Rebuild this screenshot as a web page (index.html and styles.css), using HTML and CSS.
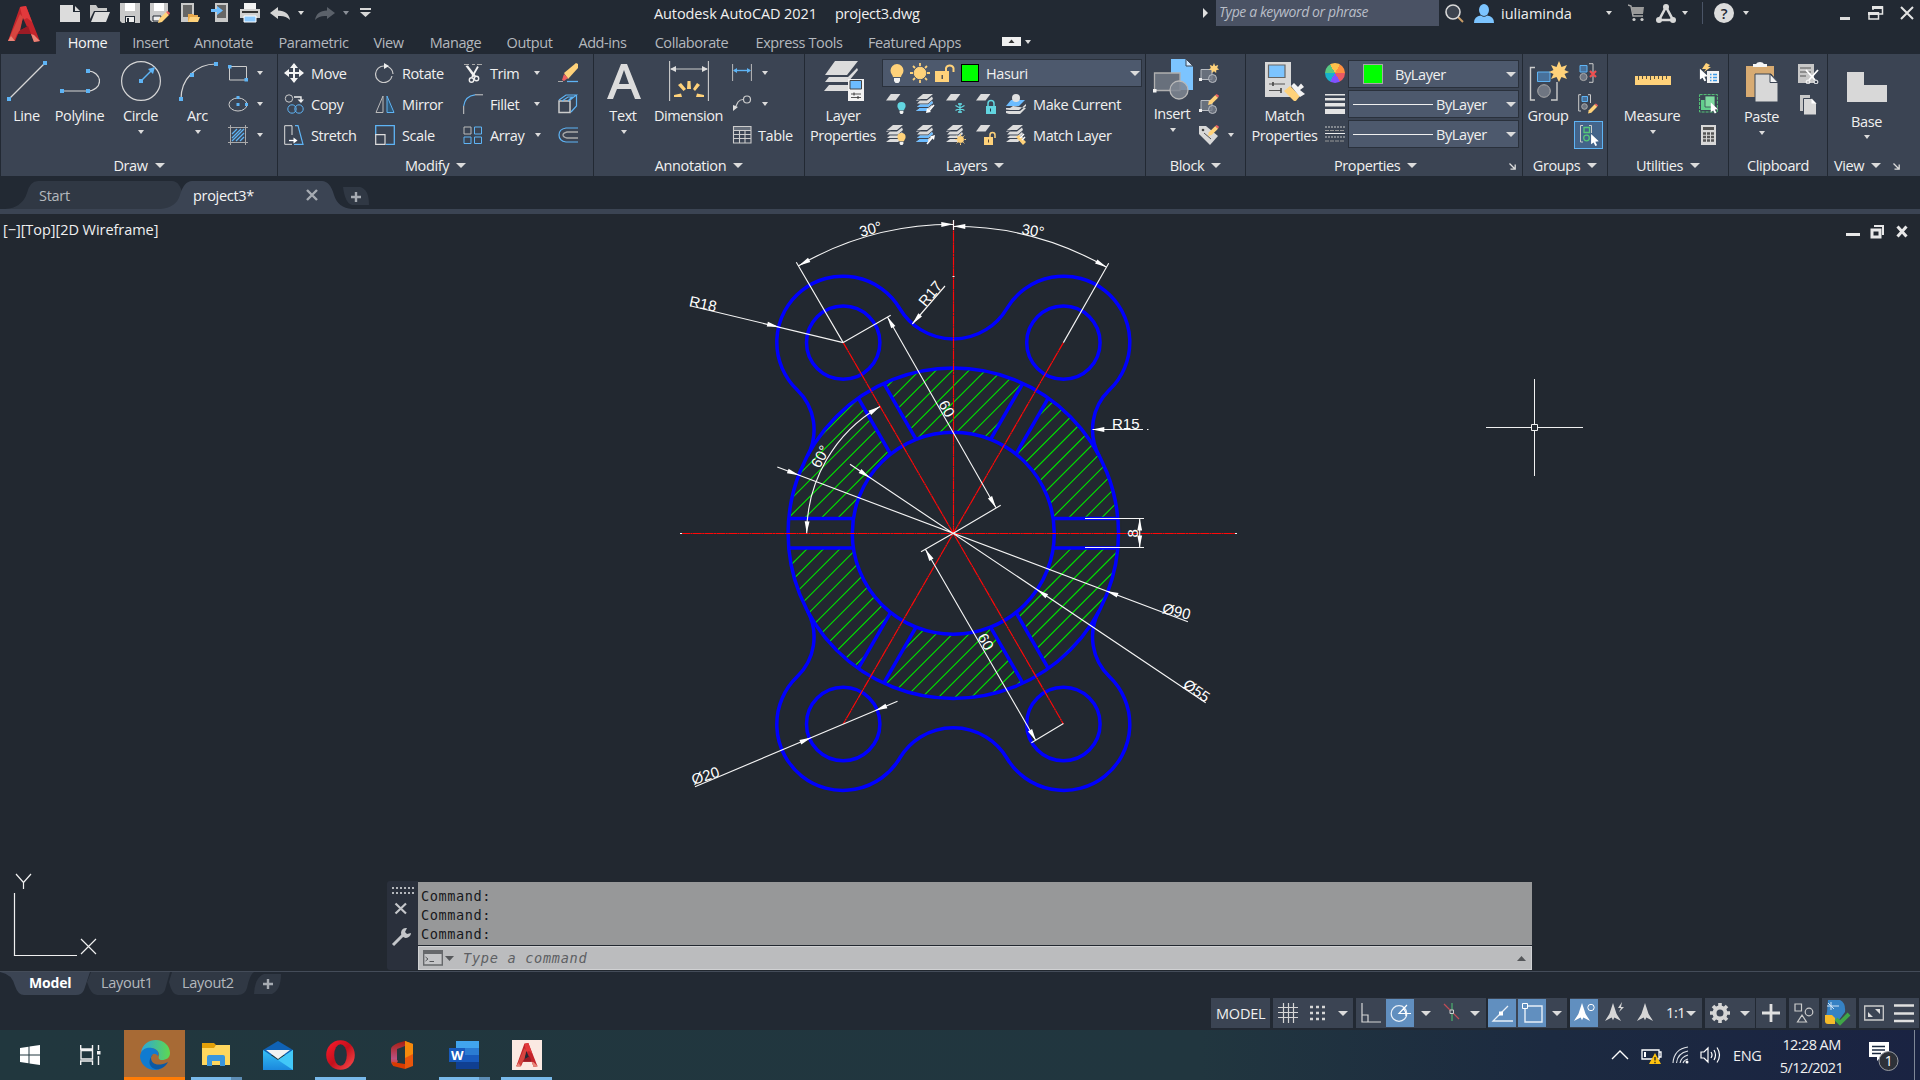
FILE: index.html
```html
<!DOCTYPE html>
<html lang="en">
<head>
<meta charset="utf-8">
<title>Autodesk AutoCAD 2021 - project3.dwg</title>
<link rel="stylesheet" href="styles.css">
</head>
<body>
<svg class="defs" width="0" height="0">
  <defs>
    <symbol id="sheet" viewBox="0 0 20 20"><path d="M6 0H18L12 8H0Z" fill="#dcdcdc"/></symbol>
    <symbol id="stack" viewBox="0 0 20 20"><path d="M7 0H17L11 5H1Z" fill="#dcdcdc"/><path d="M5 5.8H1L0 7Z M1 9.5L4 6.5H11L16 2.5L17 5L12 9.5Z M1 13L4 10.5H12L16 7L17 9L12 13Z M0 17L4 14H12L16 11L17 12.5L12 17Z" fill="#dcdcdc"/></symbol>
    <symbol id="bulb" viewBox="0 0 14 19"><path d="M7 0a6.5 6.5 0 0 1 6.5 6.5c0 3-2 4-2.5 6.500H3C2.500 10.500.5 9.500.5 6.500A6.500 6.500 0 0 1 7 0Z"/><path d="M4 14h6v3l-1.500 2h-3L4 17Z" fill="#f2f2f2"/></symbol>
    <symbol id="sun" viewBox="0 0 20 20"><circle cx="10" cy="10" r="5.800"/><path d="M10 0v3M10 17v3M0 10h3M17 10h3M3 3l2 2M15 15l2 2M3 17l2-2M15 5l2-2" stroke-width="1.800"/></symbol>
    <symbol id="cursor" viewBox="0 0 10 14"><path d="M1 0L10 8.500L6 9L8 13L6 14L4 10L1 12Z" fill="#fff"/></symbol>
    <symbol id="pencil" viewBox="0 0 12 12"><path d="M0 12L1 8L8 1L11 4L4 11Z" fill="#ffd27a"/><path d="M8 1L9.500 0L12 2L11 4Z" fill="#ef5f5f"/></symbol>
    <symbol id="blockshape" viewBox="0 0 20 20"><path d="M2 6.500H13V16.500H2Z" fill="#68707c" stroke="#b9bdc3"/><circle cx="13.500" cy="15.500" r="4" fill="#757c88" fill-opacity=".8" stroke="#b9bdc3"/><path d="M0 15h3v3H0Z" fill="#eee"/></symbol>
    <symbol id="annoA" viewBox="0 0 20 22"><path d="M10 0L14 12L19 20L11.500 16L10 19L8.500 16L1 20L6 12Z"/></symbol>
    <symbol id="acad" viewBox="0 0 32 36"><path d="M12 1L18 0L31 33L32 35L26 36L23 28H10L7 35L0 35Z" fill="#c4242b"/><path d="M12 1L18 0L24 16L19 12L15 14Z" fill="#e2393c"/><path d="M15 12L19 21L11 25Z" fill="#222933"/><path d="M15 11L12 25L9 28L6 35L0 35L12 8Z" fill="#d6453f"/><path d="M3 30L7 35H0ZM26 29L32 35L26 36L23 28Z" fill="#e98578"/><path d="M11 25L20 20L23 28H10Z" fill="#9c1b25"/></symbol>
    <symbol id="arrow" overflow="visible"><path d="M0 0L-12 -2.400V2.400Z" fill="#fff"/></symbol>
    <symbol id="launcher" viewBox="0 0 7 7"><path d="M.5 .5L6 6M6.200 1.500V6.200H1.500" fill="none" stroke="#ddd" stroke-width="1.300"/></symbol>
    <clipPath id="ring"><path clip-rule="evenodd" d="M788.100 533.300A165.200 165.200 0 1 1 1118.500 533.300A165.200 165.200 0 1 1 788.100 533.300ZM852.300 533.300A101 101 0 1 1 1054.300 533.300A101 101 0 1 1 852.300 533.300Z"/></clipPath>
    <linearGradient id="edgeA" x1="0" y1="0" x2="1" y2="0"><stop offset="0" stop-color="#2ba6dc"/><stop offset="1" stop-color="#5fd84f"/></linearGradient>
    <linearGradient id="mailA" x1="0" y1="0" x2="0" y2="1"><stop offset="0" stop-color="#35c0f5"/><stop offset="1" stop-color="#1b88dd"/></linearGradient>
    <linearGradient id="operaA" x1="0" y1="0" x2="1" y2="1"><stop offset="0" stop-color="#ff1b2d"/><stop offset=".5" stop-color="#c4101c"/><stop offset="1" stop-color="#ff5050"/></linearGradient>
    <linearGradient id="officeA" x1="0" y1="0" x2="0" y2="1"><stop offset="0" stop-color="#a81d10"/><stop offset=".7" stop-color="#b85080"/><stop offset="1" stop-color="#e03c10"/></linearGradient>
  </defs>
</svg>

<header class="top">
  <div class="logo"><svg width="32" height="36"><use href="#acad"/></svg></div>
  <div class="top-main">
    <div class="titlebar">
      <svg width="20" height="17"><path d="M0 0H13V7H20V17H0Z" fill="#dcdcdc"/><path d="M15 1L20 6H15Z" fill="#dcdcdc"/></svg>
      <svg width="20" height="17"><path d="M0 0H6L8 3H17V6H4L0 14Z" fill="#c8c8c8"/><path d="M5 7H20L16 17H1Z" fill="#dcdcdc"/></svg>
      <svg width="20" height="20"><path d="M0 0H20V20H2L0 18Z" fill="#c9c9c9"/><path d="M5 0H15V8H5Z" fill="#fff"/><path d="M5 13H15V20H5Z" fill="#222933"/><path d="M6 14H14V19H6Z" fill="#eee"/><path d="M7 15h2v4H7Z" fill="#222933"/></svg>
      <svg width="20" height="20"><path d="M0 0H18V10L9 19H2L0 17Z" fill="#c9c9c9"/><path d="M4 0H14V8H4Z" fill="#fff"/><path d="M3 13H11V18H3Z" fill="#eee" stroke="#222933"/><use href="#pencil" x="8" y="8" width="12" height="12"/></svg>
      <svg width="19" height="20"><path d="M0 0H13V19H0Z" fill="#c9c9c9"/><path d="M2 2H11V14H2Z" fill="#666"/><path d="M7 11H12L13 12H17V19H7Z" fill="#e9a94c"/><path d="M9 14H19L17 19H7Z" fill="#ffd27a"/></svg>
      <svg width="18" height="20"><path d="M4 0H17V19H4Z" fill="#c9c9c9"/><path d="M6 2H15V15H6Z" fill="#666"/><path d="M0 6H6V3L12 7.500L6 12V9H0Z" fill="#6cbcff"/></svg>
      <svg width="20" height="20"><path d="M4 0H16V6H4Z" fill="#f2f2f2"/><path d="M0 6H20V15H0Z" fill="#d0d0d0"/><path d="M2 8H18V10H2Z" fill="#333"/><path d="M4 13H16V19H4Z" fill="#8ccaff" stroke="#fff"/></svg>
      <svg width="20" height="13"><path d="M0 6L8 0V3.500C15 3.500 19 7 20 13C17 9.500 13 8.500 8 9V12Z" fill="#d4d4d4"/></svg>
      <i class="caret"></i>
      <svg width="20" height="13"><path d="M20 6L12 0V3.500C5 3.500 1 7 0 13C3 9.500 7 8.500 12 9V12Z" fill="#5b616a"/></svg>
      <i class="caret dim"></i>
      <svg width="11" height="10"><path d="M0 0H11V2H0ZM0 4H11L5.500 9Z" fill="#d8d8d8"/></svg>
      <span class="apptitle">Autodesk AutoCAD 2021</span>
      <span class="apptitle doc">project3.dwg</span>
      <svg width="6" height="10"><path d="M0 0L5 5L0 10Z" fill="#e0e0e0"/></svg>
      <div class="search">Type a keyword or phrase</div>
      <svg width="19" height="19"><path d="M13 13L18 18" stroke="#c89b66" stroke-width="2"/><circle cx="8" cy="8" r="7" fill="#3c434e" stroke="#d8d8d8" stroke-width="1.600"/></svg>
      <svg width="20" height="19"><ellipse cx="10" cy="6" rx="5" ry="6" fill="#7cc4ff"/><path d="M0 19Q0 12 7 11.500Q10 14 13 11.500Q20 12 20 19Z" fill="#7cc4ff"/></svg>
      <span class="user">iuliaminda</span>
      <i class="caret"></i>
      <svg width="17" height="18"><path d="M0 1L3 2L5 12H15" fill="none" stroke="#aaa" stroke-width="1.400"/><path d="M3 3H16L15 10H5Z" fill="#9a9a9a"/><circle cx="6" cy="15.500" r="1.600" fill="#ccc"/><circle cx="14" cy="15.500" r="1.600" fill="#ccc"/></svg>
      <svg width="20" height="19"><path d="M10 3L3 16H17Z" fill="none" stroke="#d8d8d8" stroke-width="2.600"/><circle cx="10" cy="3" r="3" fill="#d8d8d8"/><circle cx="3" cy="16" r="3" fill="#d8d8d8"/><circle cx="17" cy="16" r="3" fill="#d8d8d8"/></svg>
      <i class="caret"></i>
      <svg width="2" height="22"><path d="M.5 0V22" stroke="#4a5466"/></svg>
      <span class="help">?</span>
      <i class="caret"></i>
      <svg width="11" height="16"><path d="M0 12H10V15H0Z" fill="#dcdcdc"/></svg>
      <svg width="16" height="15"><path d="M5 4V1H14.500V8H11" fill="none" stroke="#e4e4e4" stroke-width="1.500"/><path d="M4 0H15V3H4ZM0 6H11V9H0Z" fill="#e4e4e4"/><path d="M1 7H10.500V13H1Z" fill="none" stroke="#e4e4e4" stroke-width="1.500"/></svg>
      <svg width="14" height="14"><path d="M1 1L13 13M13 1L1 13" stroke="#e4e4e4" stroke-width="2"/></svg>
    </div>
    <nav class="tabs">
      <span class="on">Home</span><span>Insert</span><span>Annotate</span><span>Parametric</span><span>View</span><span>Manage</span><span>Output</span><span>Add-ins</span><span>Collaborate</span><span>Express Tools</span><span>Featured Apps</span>
      <svg width="19" height="9"><path d="M0 0H19V9H0Z" fill="#f0f0f0"/><path d="M6.500 6H12.500L9.500 2.500Z" fill="#333"/></svg>
      <i class="caret"></i>
    </nav>
  </div>
</header>

<section class="ribbon">
  <div class="panel draw">
    <div class="body">
      <div class="big"><svg width="40" height="40"><path d="M2 38L38 2" stroke="#d6d6d6" stroke-width="1.200"/><path d="M0 36h4v4H0ZM36 0h4v4H36Z" fill="#5eb4f5"/></svg><span>Line</span></div>
      <div class="big"><svg width="40" height="40"><path d="M2 30H28A11.500 10 0 0 0 28 10" fill="none" stroke="#d6d6d6" stroke-width="1.200"/><path d="M0 28h4v4H0ZM26 28h4v4H26ZM26 8h4v4H26Z" fill="#5eb4f5"/></svg><span>Polyline</span></div>
      <div class="big"><svg width="40" height="40"><circle cx="20" cy="20" r="19.400" fill="none" stroke="#d6d6d6" stroke-width="1.200"/><path d="M20 20L31 9" stroke="#5eb4f5" stroke-width="1.400"/><path d="M18 18h4v4H18ZM34 6L27 8L32 13Z" fill="#5eb4f5"/></svg><span>Circle</span><i class="caret"></i></div>
      <div class="big"><svg width="40" height="40"><path d="M3 38C3 18 18 3 38 3" fill="none" stroke="#d6d6d6" stroke-width="1.200"/><path d="M1 36h4v4H1ZM12 12h4v4H12ZM36 1h4v4H36Z" fill="#5eb4f5"/></svg><span>Arc</span><i class="caret"></i></div>
      <div class="rows minis">
        <div><svg width="20" height="20"><path d="M1.500 3.500H18.500V17H1.500Z" fill="none" stroke="#ccc"/><path d="M0 2h3.500v3.500H0ZM16.500 15H20v3.500H16.500Z" fill="#5eb4f5"/></svg><i class="caret"></i></div>
        <div><svg width="20" height="20"><ellipse cx="10" cy="10.500" rx="9" ry="6.500" fill="none" stroke="#ccc"/><path d="M8.500 2h3v3h-3ZM8.500 9h3v3h-3ZM17 9h3v3H17Z" fill="#5eb4f5"/></svg><i class="caret"></i></div>
        <div><svg width="20" height="20"><path d="M2.500 0V20M17.500 0V20M0 2.500H20M0 17.500H20" stroke="#aaa"/><path d="M4 9L9 4M4 13L13 4M4 16L16 4M8 16L16 8M12 16L16 12" stroke="#5eb4f5" stroke-width="1.300"/></svg><i class="caret"></i></div>
      </div>
    </div>
    <div class="ptitle"><span>Draw</span><i class="caret lg"></i></div>
  </div>

  <div class="panel modify">
    <div class="body">
      <div class="rows">
        <div><svg width="20" height="20"><path d="M10 1V19M1 10H19" stroke="#f4f4f4" stroke-width="2"/><path d="M10 0L14 5H6ZM10 20L14 15H6ZM0 10L5 6V14ZM20 10L15 6V14Z" fill="#f4f4f4"/></svg>Move</div>
        <div><svg width="20" height="20"><circle cx="5" cy="4.500" r="3.700" fill="none" stroke="#ccc"/><path d="M10 3H17V7" fill="none" stroke="#eee" stroke-width="1.400"/><path d="M13.500 5.500H20L17 9Z" fill="#eee"/><circle cx="8" cy="15" r="4.200" fill="none" stroke="#5eb4f5"/><circle cx="15" cy="15" r="4.200" fill="none" stroke="#5eb4f5"/></svg>Copy</div>
        <div><svg width="20" height="20"><path d="M8 19.300H.7V.7H8V10" fill="none" stroke="#ddd"/><path d="M11 .7H14L19 19.300H10" fill="none" stroke="#5eb4f5" stroke-width="1.200"/><path d="M5 15.500H11" stroke="#fff" stroke-width="1.300"/><path d="M9.500 12.500V18.500L13.500 15.500Z" fill="#fff"/></svg>Stretch</div>
      </div>
      <div class="rows">
        <div><svg width="20" height="20"><path d="M9 3A8.300 8.300 0 1 0 17 13M12 3Q18 6 18 11" fill="none" stroke="#ccc" stroke-width="1.200"/><path d="M9 0L14 3L9 6Z" fill="#eee"/></svg>Rotate</div>
        <div><svg width="20" height="20"><path d="M8 2V18.500H1Z" fill="none" stroke="#bbb"/><path d="M12 2V18.500H19Z" fill="#2f5877" stroke="#5eb4f5"/></svg>Mirror</div>
        <div><svg width="20" height="20"><path d="M.7 10V.7H19.300V19.300H11" fill="none" stroke="#5eb4f5" stroke-width="1.300"/><path d="M.7 9.700H10V19.300H.7Z" fill="none" stroke="#ddd" stroke-width="1.200"/></svg>Scale</div>
      </div>
      <div class="rows">
        <div><svg width="20" height="20"><path d="M1 1.500H6M9 1.500H12M14 1.500H19" stroke="#aaa"/><path d="M2.500 3L5 2.500L13 13L10.500 14Z" fill="#f2f2f2"/><path d="M15 3.500L9 14" stroke="#f2f2f2" stroke-width="1.800"/><circle cx="8.500" cy="17" r="2.200" fill="none" stroke="#eee" stroke-width="1.400"/><circle cx="13.500" cy="15.500" r="2.200" fill="none" stroke="#eee" stroke-width="1.400"/></svg>Trim<i class="caret c1"></i></div>
        <div><svg width="20" height="20"><path d="M.7 20V12" stroke="#ccc"/><path d="M.7 12Q2 2 12 .8" fill="none" stroke="#5eb4f5" stroke-width="1.200"/><path d="M12 .8H20" stroke="#ccc"/></svg>Fillet<i class="caret c2"></i></div>
        <div><svg width="20" height="20"><path d="M1 2H8V9H1Z" fill="none" stroke="#bbb"/><path d="M11.500 2H18.500V9H11.500ZM1 12H8V18.500H1ZM11.500 12H18.500V18.500H11.500Z" fill="none" stroke="#5eb4f5"/></svg>Array<i class="caret c3"></i></div>
      </div>
      <div class="rows">
        <div><svg width="20" height="20"><path d="M0 18.500H5" stroke="#aaa"/><path d="M9 18.500H20" stroke="#5eb4f5" stroke-width="1.300"/><path d="M6 10L18 0L20 1V5L10 16Z" fill="#ffd27a"/><path d="M6 11L10 15L6 18L4 17Z" fill="#ef5f5f"/></svg></div>
        <div><svg width="20" height="20"><path d="M1 7H12V18.500H1Z" fill="none" stroke="#ccc" stroke-width="1.500"/><path d="M1 6L8 1H18.500L12 6M18.500 1V12L13 18M4 7L10 3H14L10 7" fill="none" stroke="#5eb4f5" stroke-width="1.200"/></svg></div>
        <div><svg width="20" height="20"><path d="M20 3H8Q1 4 1 10T8 17H20" fill="none" stroke="#5eb4f5" stroke-width="1.200"/><path d="M20 7H9Q5 8 5 10T9 13H20" fill="none" stroke="#aaa" stroke-width="1.300"/></svg></div>
      </div>
    </div>
    <div class="ptitle"><span>Modify</span><i class="caret lg"></i></div>
  </div>

  <div class="panel annotation">
    <div class="body">
      <div class="big"><svg width="40" height="40"><path d="M17 3H23L37 38H31L27 28H13L9 38H3ZM20 9L15 23H25Z" fill="#dcdcdc"/></svg><span>Text</span><i class="caret"></i></div>
      <div class="big"><svg width="40" height="40"><path d="M.6 0V40M39.400 0V40M2 8H38" stroke="#ccc" stroke-width="1.100"/><path d="M1 8L7 5V11ZM39 8L33 5V11Z" fill="#ddd"/><path d="M18.500 20H21.500L22 28H18ZM9 24L12 22L17 28L14.500 30ZM31 24L28 22L24 28L26 30ZM5 34L12 32.500L13 36H5ZM35 34L28 32.500L27 36H35Z" fill="#ffd27a"/></svg><span>Dimension</span></div>
      <div class="rows">
        <div><svg width="20" height="20"><path d="M.6 1V18M19.400 1V18" stroke="#bbb"/><path d="M2 7.500H18" stroke="#5eb4f5" stroke-width="1.400"/><path d="M1 7.500L5 5V10ZM19 7.500L15 5V10Z" fill="#5eb4f5"/></svg><i class="caret"></i></div>
        <div><svg width="20" height="20"><circle cx="15" cy="5.500" r="3.500" fill="none" stroke="#ccc" stroke-width="1.200"/><path d="M11 5.500Q8 5.500 6 8L3 14" fill="none" stroke="#ccc" stroke-width="1.200"/><path d="M1 17V11L6 13Z" fill="#ddd"/></svg><i class="caret"></i></div>
        <div class="tbl"><svg width="20" height="20"><path d="M1.500 1.500H19V5H1.500Z" fill="#666e7a"/><path d="M1.500 1.500H19V18H1.500ZM1.500 5.500H19M1.500 9.500H19M1.500 13.500H19M7.500 5.500V18M13 5.500V18" fill="none" stroke="#ccc" stroke-width="1.100"/></svg>Table</div>
      </div>
    </div>
    <div class="ptitle"><span>Annotation</span><i class="caret lg"></i></div>
  </div>

  <div class="panel layers">
    <div class="body">
      <div class="big"><svg width="40" height="40"><path d="M11 0H34L23 14H1Z" fill="#dcdcdc"/><path d="M1 21L5 16H24L33 7L34 9L24 21ZM0 30L5 24H24V30Z" fill="#dcdcdc"/><path d="M24 18H40V40H24Z" fill="#f2f2f2"/><path d="M26 19.500H37.500V28H26Z" fill="#6cbcff" stroke="#444"/><path d="M27 33H37M27 36.500H37" stroke="#555"/><path d="M30 31.500v3M34 35v3" stroke="#333"/></svg><span>Layer</span><span class="second">Properties</span></div>
      <div class="rows">
        <div><div class="combo layer-combo">
          <svg width="14" height="19" fill="#ffd27a"><use href="#bulb"/></svg>
          <svg width="20" height="20" fill="#ffd27a" stroke="#ffd27a"><use href="#sun"/></svg>
          <svg width="20" height="20"><path d="M0 8H14V19H0Z" fill="#ffd27a"/><path d="M11 9V5A4 4 0 0 1 18.500 5V9" fill="none" stroke="#ffd27a" stroke-width="2"/><path d="M6.500 12h1.500v4H6.500Z" fill="#555"/></svg>
          <b class="sw"></b><span>Hasuri</span><i class="caret lg"></i></div></div>
        <div class="lr">
          <svg width="20" height="20"><use href="#sheet" x="0" y="0" width="16" height="16"/><use href="#bulb" x="11" y="8" width="9" height="12" fill="#62d5e0"/></svg>
          <svg width="20" height="20"><use href="#stack" width="20" height="20"/><path d="M1 13L4 10.500H12L16 7L17 9L12 13ZM0 17L4 14H12V17Z" fill="#6cbcff"/><path d="M18 11L13 17" stroke="#fff" stroke-width="1.400"/><path d="M10 19L11 14L15 18Z" fill="#fff"/></svg>
          <svg width="20" height="20"><use href="#sheet" width="16" height="16"/><path d="M14 9V19M9.500 11.500L18.500 16.500M9.500 16.500L18.500 11.500M12 10H16M12 18H16" stroke="#62d5e0" stroke-width="1.300"/></svg>
          <svg width="20" height="20"><use href="#sheet" width="16" height="16"/><path d="M10 12H20V20H10Z" fill="#62d5e0"/><path d="M12 12V9.500A3 3 0 0 1 18 9.500V12" fill="none" stroke="#62d5e0" stroke-width="1.500"/><path d="M14.500 14.500v3" stroke="#234"/></svg>
          <svg width="20" height="20"><path d="M7 12L4 14H0V15.500L4 16H13L20 10V12L14 17H0V19L3 20H14L20 14" fill="#dcdcdc"/><path d="M0 12L5 6H19L13 12Z" fill="#6cbcff"/><circle cx="10" cy="4" r="4" fill="#e0e0e0"/></svg>
          <span>Make Current</span></div>
        <div class="lr">
          <svg width="20" height="20"><use href="#stack" width="20" height="20"/><use href="#bulb" x="11" y="8" width="9" height="12" fill="#ffd27a"/></svg>
          <svg width="20" height="20"><use href="#stack" width="20" height="20"/><path d="M1 13L4 10.500H12L16 7L17 9L12 13ZM0 17L4 14H12V17Z" fill="#6cbcff"/><path d="M11 19L16 13" stroke="#fff" stroke-width="1.400"/><path d="M19 10L18 15L14 11.500Z" fill="#fff"/></svg>
          <svg width="20" height="20"><use href="#stack" width="20" height="20"/><use href="#sun" x="9" y="9" width="11" height="11" fill="#ffd27a" stroke="#ffd27a"/></svg>
          <svg width="20" height="20"><use href="#sheet" width="16" height="16"/><path d="M8 12H17V20H8Z" fill="#ffd27a"/><path d="M14 12V10A2.500 2.500 0 0 1 19 10V13" fill="none" stroke="#ffd27a" stroke-width="1.500"/><path d="M12.500 14.500v3" stroke="#543"/></svg>
          <svg width="20" height="20"><use href="#stack" width="20" height="20"/><path d="M10 12L13 10L20 17L17 20Z" fill="#ffd27a"/><path d="M14 13L18 9M16 15L19 12" stroke="#fff" stroke-width="1.500"/></svg>
          <span>Match Layer</span></div>
      </div>
    </div>
    <div class="ptitle"><span>Layers</span><i class="caret lg"></i></div>
  </div>

  <div class="panel block">
    <div class="body">
      <div class="big up"><svg width="40" height="42"><path d="M18 0H33L40 7V31H18Z" fill="#7cc4ff"/><path d="M33 0V7H40Z" fill="#cfe8ff" stroke="#3b4453"/><path d="M1.500 14H27V31.500H1.500Z" fill="#68707c" stroke="#b0b0b0" stroke-width="1.300"/><circle cx="26" cy="31" r="9" fill="#7f8692" fill-opacity=".85" stroke="#b8b8b8" stroke-width="1.300"/><path d="M0 30h3.500v3.500H0Z" fill="#f2f2f2"/></svg><span>Insert</span><i class="caret"></i></div>
      <div class="rows minis">
        <div><svg width="20" height="20"><use href="#blockshape" width="20" height="20"/><path d="M15 0l1.200 3 3-1-1 3 2 1.500-3 .8 0 2.700-2.200-1.800-2.200 1.800 0-2.700-3-.8 2-1.500-1-3 3 1Z" fill="#ffd27a"/></svg></div>
        <div><svg width="20" height="20"><use href="#blockshape" width="20" height="20"/><use href="#pencil" x="9" y="0" width="11" height="11"/></svg></div>
        <div><svg width="20" height="20"><path d="M0 1H7L19 11L11 20L0 9Z" fill="#d8d8d8"/><path d="M5 8L12 14" stroke="#555"/><circle cx="4" cy="5" r="1.300" fill="#444"/><use href="#pencil" x="9" y="0" width="11" height="11"/></svg><i class="caret"></i></div>
      </div>
    </div>
    <div class="ptitle"><span>Block</span><i class="caret lg"></i></div>
  </div>

  <div class="panel props">
    <div class="body">
      <div class="big"><svg width="40" height="42"><path d="M0 1H26V36H0Z" fill="#d8d8d8"/><path d="M3.500 4H20V16.500H3.500Z" fill="#7cc4ff" stroke="#666" stroke-width="1.200"/><path d="M4 23H20M4 29.500H16" stroke="#555"/><path d="M8 21v4M16 27v5" stroke="#444" stroke-width="1.600"/><path d="M19 30L25 25L35 35L30 41Z" fill="#ffd27a"/><path d="M26 25L29 22L33 26L36 22.500L39 26L35 29L40 33L35 36Z" fill="#f2f2f2"/></svg><span>Match</span><span class="second">Properties</span></div>
      <div class="rows minis">
        <div><i class="wheel"></i></div>
        <div><svg width="20" height="20"><path d="M0 0H20V1.500H0ZM0 4H20V6.500H0ZM0 9H20V12.500H0ZM0 15H20V20H0Z" fill="#e4e4e4"/></svg></div>
        <div><svg width="20" height="20"><path d="M0 2H20M0 12H20" stroke="#ccc" stroke-dasharray="2 1"/><path d="M0 5.500H20M0 16H20" stroke="#999" stroke-dasharray="4 1"/><path d="M0 8.500H20" stroke="#eee"/></svg></div>
      </div>
      <div class="combos">
        <div class="combo c-color"><b class="sw"></b><span>ByLayer</span><i class="caret lg"></i></div>
        <div class="combo c-line"><b></b><span>ByLayer</span><i class="caret lg"></i></div>
        <div class="combo c-line"><b></b><span>ByLayer</span><i class="caret lg"></i></div>
      </div>
    </div>
    <div class="ptitle"><span>Properties</span><i class="caret lg"></i><svg class="launch" width="7" height="7"><use href="#launcher"/></svg></div>
  </div>

  <div class="panel groups">
    <div class="body">
      <div class="big"><svg width="40" height="42"><path d="M6 6.500H1.500V39H6M22 39H28V21" fill="none" stroke="#ccc" stroke-width="1.400"/><path d="M8.500 11H21V20.500H8.500Z" fill="#48719b" stroke="#5eb4f5"/><circle cx="15" cy="30" r="6.300" fill="#6f7682" stroke="#aaa"/><path d="M30 0L32.500 6L38 4L35.500 9L40 11L35.500 13L38 18L32.500 16L30 21L27.500 16L22 18L24.500 13L20 11L24.500 9L22 4L27.500 6Z" fill="#ffd27a"/></svg><span>Group</span></div>
      <div class="rows">
        <div><svg width="20" height="20"><path d="M11 .7H15V19.300H11" fill="none" stroke="#ccc"/><path d="M2 2.500H9V9H2Z" fill="#48719b" stroke="#5eb4f5"/><circle cx="5.500" cy="14" r="3.600" fill="#6f7682" stroke="#aaa"/><path d="M12 8L18 14M18 8L12 14" stroke="#ef4f4f" stroke-width="2.200"/></svg></div>
        <div><svg width="20" height="20"><path d="M3 .7H.7V17H3M10 .7H12.500V9" fill="none" stroke="#ccc"/><path d="M4 2.500H9.500V7.500H4Z" fill="#48719b" stroke="#5eb4f5"/><circle cx="6.500" cy="12.500" r="2.800" fill="#6f7682" stroke="#aaa"/><use href="#pencil" x="10" y="9" width="10" height="11"/></svg></div>
        <div><span class="picked"><svg width="20" height="22"><path d="M4 1.500H1.500V18H4M10 1.500H12.500V9" fill="none" stroke="#ccc"/><path d="M5 3.500H10.500V8.500H5Z" fill="none" stroke="#55c878" stroke-width="1.300"/><circle cx="7.500" cy="14" r="2.800" fill="none" stroke="#55c878" stroke-width="1.300"/><use href="#cursor" x="11" y="10" width="9" height="12"/></svg></span></div>
      </div>
    </div>
    <div class="ptitle"><span>Groups</span><i class="caret lg"></i></div>
  </div>

  <div class="panel utils">
    <div class="body">
      <div class="big"><svg width="40" height="40"><path d="M2 15H38V24H2Z" fill="#ffd27a"/><path d="M5.500 15v4M9.500 15v3M13.500 15v3M17.500 15v4M21.500 15v3M25.500 15v3M29.500 15v4M33.500 15v3" stroke="#5a5340"/></svg><span>Measure</span><i class="caret"></i></div>
      <div class="rows">
        <div><svg width="20" height="20"><path d="M7 0L11 2L9 4H12L5 9L7 6L3 6Z" fill="#ffd27a"/><use href="#cursor" x="0" y="5" width="9" height="14"/><path d="M8 8H20V20H8Z" fill="#f2f2f2"/><path d="M11 11.500h1.500M14 11.500h4M11 14.500h1.500M14 14.500h4M11 17.500h1.500M14 17.500h4" stroke="#3d9be8" stroke-width="1.300"/></svg></div>
        <div><svg width="20" height="20"><path d="M.6 .6H18.400V18H.6Z" fill="none" stroke="#55c878" stroke-dasharray="3 1"/><path d="M2 6H12V16H2Z" fill="#62cf8c"/><path d="M6 2H16V13H6Z" fill="#7fdba0" stroke="#3b4453" stroke-width=".8"/><use href="#cursor" x="11" y="8" width="8" height="12"/></svg></div>
        <div><svg width="20" height="20"><path d="M2 0H17V20H2Z" fill="#d8d8d8"/><path d="M4 2H15V5H4Z" fill="#555"/><path d="M4 8.500H15M4 12H15M4 15.500H15" stroke="#555" stroke-width="2.400" stroke-dasharray="3 1"/></svg></div>
      </div>
    </div>
    <div class="ptitle"><span>Utilities</span><i class="caret lg"></i></div>
  </div>

  <div class="panel clip">
    <div class="body">
      <div class="big dn"><svg width="32" height="40"><path d="M0 4H28V35H0Z" fill="#d8ab72"/><path d="M7 5V2H10Q11 0 14 0T18 2H21V5Z" fill="#f6f6f6"/><path d="M9 12H25L32 20V40H9Z" fill="#d8d8d8" stroke="#3b4453"/><path d="M24 12L32 20.500H24Z" fill="#f4f4f4" stroke="#3b4453"/></svg><span>Paste</span><i class="caret"></i></div>
      <div class="rows">
        <div><svg width="21" height="20"><path d="M0 0H16V19H0Z" fill="#c8c8c8"/><path d="M2 4H13M2 8H13M2 12H8" stroke="#555"/><path d="M8 6L17 16M20 6L11 16" stroke="#fff" stroke-width="1.800"/><circle cx="10" cy="18" r="1.900" fill="none" stroke="#fff"/><circle cx="18" cy="18" r="1.900" fill="none" stroke="#fff"/></svg></div>
        <div><svg width="20" height="20"><path d="M2 0H12V16H2Z" fill="#c8c8c8" /><path d="M5.500 3.500H14L18.500 8.500V20H5.500Z" fill="#d8d8d8" stroke="#3b4453"/><path d="M13.500 3.500V8.500H18.500Z" fill="#fff"/></svg></div>
      </div>
    </div>
    <div class="ptitle"><span>Clipboard</span></div>
  </div>

  <div class="panel view">
    <div class="body">
      <div class="big"><svg width="40" height="40"><path d="M0 8H17V21H40V38H0Z" fill="#d8d8d8"/></svg><span>Base</span><i class="caret"></i></div>
    </div>
    <div class="ptitle"><span>View</span><i class="caret lg"></i><svg class="launch" width="7" height="7"><use href="#launcher"/></svg></div>
  </div>
</section>

<nav class="filetabs">
  <svg class="ftshape" width="380" height="33"><path d="M5 28Q22 27 27 12Q30 0 38 0H172Q180 0 183 15L180 28Z" fill="#303844"/><path d="M160 28Q176 27 180 14Q184 0 192 0H322Q330 0 334 14Q338 27 352 28Z" fill="#3b4453"/><path d="M343 6H360Q369 8 369 24H352Q345 22 343 6Z" fill="#303844"/><path d="M307 9L317 19M317 9L307 19" stroke="#a6abb2" stroke-width="2.400"/><path d="M356 11V21M351 16H361" stroke="#a6abb2" stroke-width="2.400"/></svg>
  <span>Start</span><span class="on">project3*</span>
</nav>

<main class="canvas">
  <svg class="drawing" width="1920" height="757" viewBox="0 214 1920 757">
    <!-- hatched ring with slots cut out: one broad dashed stroke makes the 45° lines -->
    <g clip-path="url(#ring)"><path d="M876.600 -297H1230" transform="rotate(45)" stroke="#00e000" stroke-width="480" stroke-dasharray="1.150 10.500"/></g>
    <g fill="#222830">
      <path id="slot" d="M785 518.600H855V548H785Z"/>
      <use href="#slot" transform="rotate(60 953.300 533.300)"/><use href="#slot" transform="rotate(120 953.300 533.300)"/><use href="#slot" transform="rotate(180 953.300 533.300)"/><use href="#slot" transform="rotate(240 953.300 533.300)"/><use href="#slot" transform="rotate(300 953.300 533.300)"/>
    </g>
    <g fill="none" stroke="#0000fe" stroke-width="3.500">
      <circle cx="953.300" cy="533.300" r="165.200"/><circle cx="953.300" cy="533.300" r="101"/>
      <path id="edges" d="M788.800 518.600H853.400M788.800 548H853.400"/>
      <use href="#edges" transform="rotate(60 953.300 533.300)"/><use href="#edges" transform="rotate(120 953.300 533.300)"/><use href="#edges" transform="rotate(180 953.300 533.300)"/><use href="#edges" transform="rotate(240 953.300 533.300)"/><use href="#edges" transform="rotate(300 953.300 533.300)"/>
      <path id="lobes" d="M807.600 455.500A55 55 0 0 0 797.300 390.100A66.100 66.100 0 1 1 899.800 308.600A62.400 62.400 0 0 0 1006.800 308.600A66.100 66.100 0 1 1 1109.300 390.100A55 55 0 0 0 1099 455.500"/>
      <use href="#lobes" transform="matrix(1 0 0 -1 0 1066.600)"/>
      <circle cx="843.200" cy="342.600" r="36.700"/><circle cx="1063.400" cy="342.600" r="36.700"/><circle cx="843.200" cy="724" r="36.700"/><circle cx="1063.400" cy="724" r="36.700"/>
    </g>
    <g stroke="#ff0808" stroke-width="1.200" stroke-dasharray="9 .4 2 .4">
      <path d="M681 533.500H1236M953.500 221V533M843.200 342.600L1063.400 724M1063.400 342.600L843.200 724"/>
    </g>
    <g fill="none" stroke="#f4f4f4" stroke-width="1.150">
      <path d="M798.700 265.700A309 309 0 0 1 953.300 224.300M953.300 226.300A307 307 0 0 1 1106.700 267.300M843.200 342.600L796.300 262.300M1063.400 342.600L1108.700 263.300M953.500 220V230"/>
      <path d="M690 305.700L843.200 342.600M945 286L912.300 324M843.200 342.600L890.700 315.300M887.300 316.700L996 507.700M953.300 533.300L1000.700 505.300"/>
      <path d="M806.700 533.300A146.500 146.500 0 0 1 880 406.500M777.300 467L1187.900 621.700M850 464.300L1205.700 702.700"/>
      <path d="M1085 518.500H1144M1085 547.500H1144M1139.700 518.500V547.500M1092.500 429.500H1143M1147 429.500H1148.500"/>
      <path d="M925.400 549.300L1036 740.700M953.300 533.300L921 551.700M1063.400 723.600L1031.400 742.700M695 786.700L897.500 701.300"/>
      <path d="M680 533.500h2M1235 533.500h2M952.500 276.500h2"/>
    </g>
    <g>
      <use href="#arrow" transform="translate(798.700 265.700) rotate(151)"/><use href="#arrow" transform="translate(953.300 224.300) rotate(-1)"/>
      <use href="#arrow" transform="translate(953.300 226.300) rotate(181)"/><use href="#arrow" transform="translate(1106.700 267.300) rotate(29)"/>
      <use href="#arrow" transform="translate(779 327) rotate(13.500)"/><use href="#arrow" transform="translate(912.300 324) rotate(131)"/>
      <use href="#arrow" transform="translate(887.300 316.700) rotate(240)"/><use href="#arrow" transform="translate(996 507.700) rotate(60)"/>
      <use href="#arrow" transform="translate(806.700 533.300) rotate(92)"/><use href="#arrow" transform="translate(880 406.500) rotate(-32)"/>
      <use href="#arrow" transform="translate(799 475.200) rotate(20.600)"/><use href="#arrow" transform="translate(1106.400 591) rotate(200.600)"/>
      <use href="#arrow" transform="translate(870 477.700) rotate(33.900)"/><use href="#arrow" transform="translate(1036.800 589.500) rotate(213.900)"/>
      <use href="#arrow" transform="translate(1092.300 429.500) rotate(180)"/>
      <use href="#arrow" transform="translate(1139.700 518.500) rotate(-90)"/><use href="#arrow" transform="translate(1139.700 547.500) rotate(90)"/>
      <use href="#arrow" transform="translate(925.400 549.300) rotate(240)"/><use href="#arrow" transform="translate(1036 740.700) rotate(60)"/>
      <use href="#arrow" transform="translate(811.400 737.600) rotate(-22.900)"/><use href="#arrow" transform="translate(875.400 710.600) rotate(157.100)"/>
    </g>
    <g class="dims">
      <text transform="translate(861 237) rotate(-15)">30°</text>
      <text transform="translate(1021 234) rotate(9)">30°</text>
      <text transform="translate(688.500 306) rotate(12)">R18</text>
      <text transform="translate(925.500 307.500) rotate(-50)">R17</text>
      <text transform="translate(1112 429)">R15</text>
      <text transform="translate(938 404) rotate(60)">60</text>
      <text transform="translate(819.500 469) rotate(-62)">60°</text>
      <text transform="translate(1161.500 613) rotate(14)">Ø90</text>
      <text transform="translate(1182 687) rotate(33.900)">Ø55</text>
      <text transform="translate(1137.500 537.500) rotate(-90)">8</text>
      <text transform="translate(977 637) rotate(60)">60</text>
      <text transform="translate(693.500 785) rotate(-18)">Ø20</text>
    </g>
    <!-- crosshair -->
    <path d="M1486 427.500H1583M1534.500 379V476" stroke="#f0f0f0"/><path d="M1531.500 424.500H1537.500V430.500H1531.500Z" fill="#222830" stroke="#f0f0f0"/>
    <!-- coordinate system -->
    <path d="M14.500 893V955.500H77M16 874L23.500 882.500L31 874M23.500 882.500V889M81 939L96 954M96 939L81 954" fill="none" stroke="#f0f0f0" stroke-width="1.200"/>
    <g fill="none" stroke="#e8e8e8"><path d="M1852 236H1866" transform="translate(-6 -1.500)" stroke-width="3"/><path d="M1872 230H1880V237H1872Z" stroke-width="3"/><path d="M1874 226H1883V235" stroke-width="2"/><path d="M1897.500 226.500L1906.500 236.500M1906.500 226.500L1897.500 236.500" stroke-width="3"/></g>
  </svg>
  <div class="vplabel">[−][Top][2D Wireframe]</div>
  <div class="cmd">
    <div class="cmdside"><svg width="31" height="89"><path d="M5 7H27M5 12H27" stroke="#b4b7bc" stroke-width="2" stroke-dasharray="2 2"/><path d="M8.500 22.500L19 32.500M19 22.500L8.500 32.500" stroke="#c4c6ca" stroke-width="2.200"/><path d="M6 64L17 53" stroke="#c4c6ca" stroke-width="3"/><path d="M20 47A5 5 0 1 0 24 52L20 53L18 51Z" fill="#c4c6ca"/></svg></div>
    <div class="cmdmain">
      <div class="history"><p>Command:</p><p>Command:</p><p>Command:</p></div>
      <div class="entry"><svg width="32" height="16"><path d="M.7 .7H19.300V15H.7Z" fill="#c4c5c7" stroke="#66686b" stroke-width="1.400"/><path d="M0 0H20V4H0Z" fill="#66686b"/><path d="M2.500 7L5 9L2.500 11M6.500 11.500H11" fill="none" stroke="#55575a"/><path d="M22 6H31L26.500 11Z" fill="#55575a"/></svg><em>Type a command</em><svg class="up" width="9" height="5"><path d="M0 5H9L4.500 0Z" fill="#55575a"/></svg></div>
    </div>
  </div>
</main>

<footer class="lower">
  <nav class="layouts">
    <svg class="lshape" width="290" height="24"><path d="M0 0H90L84 18Q82 23 76 23H24Q18 23 15 14Q12 2 0 0Z" fill="#3b4453"/><path d="M91 0H170L165 18Q163 23 157 23H97Q91 23 87 10Z" fill="#303844"/><path d="M172 0H254Q250 2 247 16Q245 23 238 23H178Q172 23 169 10Z" fill="#303844"/><path d="M264 2H281Q281 18 272 22H254Q255 5 264 2Z" fill="#303844"/><path d="M268 7V17M263 12H273" stroke="#a6abb2" stroke-width="2.400"/></svg>
    <span class="on">Model</span><span>Layout1</span><span>Layout2</span>
  </nav>
  <div class="status">
    <div class="sg model">MODEL</div>
    <div class="sg g1"><svg width="20" height="20"><path d="M5.500 0V20M10.500 0V20M15.500 0V20M0 4.500H20M0 9.500H20M0 14.500H20" stroke="#d6d6d6" stroke-width="1.200"/></svg><svg width="16" height="16"><path d="M0 2H16M0 8H16M0 14H16" stroke="#d6d6d6" stroke-width="2.600" stroke-dasharray="3 3"/></svg><i class="caret lg"></i></div>
    <div class="sg g2"><svg width="20" height="20"><path d="M1 0V19H20M1 12H7V19" fill="none" stroke="#d6d6d6" stroke-width="1.200"/></svg><span class="act"><svg width="22" height="22"><circle cx="10" cy="11.500" r="7.800" fill="none" stroke="#e8f0f8" stroke-width="1.200"/><path d="M18 3L10 11.500H22M14.500 7Q17 9 17 14" fill="none" stroke="#fff" stroke-width="1.200"/></svg></span><i class="caret lg"></i><svg width="18" height="20"><path d="M1 1L16 16" stroke="#c04c56" stroke-width="1.200"/><path d="M9 0V18" stroke="#4ec472"/><path d="M7 7h3.500v3.500H7Z" fill="#3b4453" stroke="#ccc"/></svg><i class="caret lg"></i></div>
    <div class="sg g3"><span class="act"><svg width="22" height="22"><path d="M17 4L2 19H22" fill="none" stroke="#e8f0f8" stroke-width="1.300"/><path d="M8 9.500h4v4H8Z" fill="#fff"/></svg></span><span class="act"><svg width="22" height="22"><path d="M6 4H21V20H4V7" fill="none" stroke="#e8f0f8" stroke-width="1.400"/><path d="M1.500 1.500H6.500V6.500H1.500Z" fill="#618fbf" stroke="#fff"/></svg></span><i class="caret lg"></i></div>
    <div class="sg g4"><span class="act"><svg width="22" height="22" fill="#fff"><use href="#annoA" x="0" width="18" height="22"/><circle cx="18" cy="5.500" r="3.200" fill="none" stroke="#fff"/></svg></span><svg width="20" height="22" fill="#d6d6d6"><use href="#annoA" x="-1" width="18" height="22"/><path d="M17 0L13 6H16L14 10L19 5H16Z"/></svg><svg width="20" height="22" fill="#d6d6d6"><use href="#annoA" width="18" height="22"/></svg><span class="ratio">1:1</span><i class="caret lg"></i></div>
    <div class="sg g5"><svg width="20" height="20"><circle cx="10" cy="10" r="5.500" fill="none" stroke="#d6d6d6" stroke-width="4"/><path d="M10 0V4M10 16V20M0 10H4M16 10H20M3 3L6 6M14 14L17 17M3 17L6 14M14 6L17 3" stroke="#d6d6d6" stroke-width="3.600"/></svg><i class="caret lg"></i></div>
    <div class="sg g6"><svg width="20" height="20"><path d="M10 1V19M1 10H19" stroke="#e0e0e0" stroke-width="2.800"/></svg></div>
    <div class="sg g7"><svg width="20" height="20"><path d="M1 1H7.500V8H1ZM8 12L12.500 19H3.500Z" fill="none" stroke="#ccc" stroke-width="1.200"/><circle cx="15" cy="9" r="3.800" fill="none" stroke="#ccc" stroke-width="1.200"/></svg></div>
    <div class="sg g8"><svg width="26" height="26"><path d="M3 0H15Q21 3 20 12L14 20H0L2 12Z" fill="#3682c4"/><path d="M6 2V10M2 6H14M3 3L9 9" stroke="#cfe4f6"/><path d="M0 15H7L10 18V24H3Q0 24 0 21Z" fill="#f6bb2a"/><path d="M11 19L15 23L24 14" fill="none" stroke="#3fa648" stroke-width="4"/></svg></div>
    <div class="sg g9"><svg width="20" height="18"><path d="M.7 2H19.300V16H.7Z" fill="none" stroke="#ccc" stroke-width="1.300"/><path d="M4 13V8L9 13ZM16 5V10L11 5Z" fill="#ddd"/></svg><svg width="20" height="19"><path d="M0 1.500H20M0 9.500H20M0 17H20" stroke="#e0e0e0" stroke-width="2.300"/></svg></div>
  </div>
</footer>

<div class="taskbar">
  <div class="tb"><svg width="20" height="20"><path d="M0 3L8.500 1.800V9.500H0ZM9.500 1.500L20 0V9.500H9.500ZM0 10.500H8.500V18.200L0 17ZM9.500 10.500H20V20L9.500 18.500Z" fill="#fff"/></svg></div>
  <div class="tb view-tasks"><svg width="21" height="20"><path d="M.7 0V4H12.500V0M1 5.500H12.500V14H1ZM.7 20V16H12.500V20M18.500 0V5M18.500 11V20" fill="none" stroke="#f2f2f2" stroke-width="1.400"/><path d="M17 6h3.500v3.500H17Z" fill="#f2f2f2"/></svg></div>
  <div class="tb edge"><svg width="30" height="30"><path d="M1 13C2 4 9 0 16 0C24 0 30 6 30 13C30 18 26 20 22 20C19 20 18 18 19 16C20 12 16 8 11 8C6 8 2 10 1 13Z" fill="url(#edgeA)"/><path d="M0 16C1 9 7 7 12 8C17 9 20 13 18 16C15 12 11 14 11 18C11 25 18 28 25 25C22 29 18 30 15 30C7 30 0 24 0 16Z" fill="#0f7bd0"/><path d="M11 18C11 24 18 27 28 22C25 28 19 30 15 29C8 27 8 19 13 15C11 16 11 17 11 18Z" fill="#0c59a4"/></svg></div>
  <div class="tb run multi"><svg width="28" height="24"><path d="M0 0H12L14 2V5H0Z" fill="#e3a008"/><path d="M0 5H12L14 2H28V22H0Z" fill="#ffd75e"/><path d="M5 23V14Q5 12 7 12H21Q23 12 23 14V23H18V18H10V23Z" fill="#3a96dd"/></svg></div>
  <div class="tb"><svg width="30" height="29"><path d="M0 9L15 0L30 9V14H0Z" fill="#0f62b5"/><path d="M0 9L15 19L30 9V29H0Z" fill="url(#mailA)"/><path d="M15 19L30 9V29Z" fill="#42c8f8"/><path d="M3 9H27L15 18Z" fill="#f2f2f2"/></svg></div>
  <div class="tb run"><svg width="29" height="30"><ellipse cx="14.500" cy="15" rx="14.300" ry="14.800" fill="url(#operaA)"/><ellipse cx="14.500" cy="15" rx="6.300" ry="10.800" fill="#22353f"/></svg></div>
  <div class="tb"><svg width="24" height="30"><path d="M15 1L8 3Q1 6 1 9V21Q1 25 5 26L8 21L7 20V9L15 6Z" fill="url(#officeA)"/><path d="M2 22L15 24V29L3 26Z" fill="#d83b01"/><path d="M15 1L23 4V26L15 29Z" fill="#e8560c"/><path d="M15 1L23 4V14L15 18Z" fill="#f58a0c"/></svg></div>
  <div class="tb run multi word"><svg width="30" height="28"><path d="M7 0H30V7H7Z" fill="#41a5ee"/><path d="M7 7H30V14H7Z" fill="#2b7cd3"/><path d="M7 14H30V21H7Z" fill="#185abd"/><path d="M7 21H30V28H7Z" fill="#103f91"/><path d="M0 7H16V21H0Z" fill="#185abd"/><text class="w" x="8" y="18.500" text-anchor="middle">W</text></svg></div>
  <div class="tb run"><svg width="30" height="30"><path d="M0 0H30V30H0Z" fill="#fbe9e2"/><use href="#acad" x="4" y="3" width="22" height="24"/></svg></div>
  <div class="tray">
    <svg width="18" height="10"><path d="M1 9L9 1L17 9" fill="none" stroke="#fff" stroke-width="1.400"/></svg>
    <svg width="21" height="20"><path d="M1 5H18V14H1ZM18 7H20V12H18" fill="none" stroke="#fff" stroke-width="1.300"/><path d="M3 7h2v5H3Z" fill="#fff"/><path d="M14 8L20 19H8Z" fill="#ffc20e"/><path d="M14 12v3.500M14 16.800v1.400" stroke="#222" stroke-width="1.300"/></svg>
    <svg width="18" height="18"><g fill="none" stroke="#dfe3e8" stroke-width="1.100"><path d="M1 17Q2 3 16 1M4.500 17Q5.500 7 16 5M8 17Q9 11 16 9M11 17Q12 14 16 13"/></g><circle cx="15" cy="16" r="1.500" fill="#fff"/></svg>
    <svg width="21" height="18"><path d="M1 6H4L8 2V16L4 12H1ZM11 6Q13 9 11 12M14 4Q17 9 14 14M17 1.500Q22 9 17 16.500" fill="none" stroke="#fff" stroke-width="1.200"/></svg>
    <span class="lang">ENG</span>
    <div class="clock"><span>12:28 AM</span><span>5/12/2021</span></div>
    <svg class="notif" width="30" height="32"><path d="M0 1H20V16H12L8 20V16H0Z" fill="#fff"/><path d="M3 5.500H16M3 9H16M3 12.500H12" stroke="#1b2a40" stroke-width="1.300"/><circle cx="19.500" cy="20" r="9.500" fill="#2d3138" stroke="#9a9da3"/><text x="19.500" y="25" text-anchor="middle">1</text></svg>
    <i class="peek"></i>
  </div>
</div>
</body>
</html>
```
FILE: styles.css
```css
* { box-sizing: border-box; }
body {
  margin: 0;
  width: 1920px;
  height: 1080px;
  overflow: hidden;
  display: flex;
  flex-direction: column;
  background: #222933;
  color: #f0f0f0;
  font: 14.5px/20px "Open Sans", "Noto Sans", sans-serif;
  letter-spacing: -0.4px;
  white-space: nowrap;
}
svg { display: block; flex: none; }
.defs { position: absolute; }
.caret {
  width: 0; height: 0; flex: none;
  border: solid transparent;
  border-width: 4px 3.500px 0;
  border-top-color: #dcdcdc;
}
.caret.lg { border-width: 5px 5px 0; }
.caret.dim { border-top-color: #8b9098; }

/* header */
.top { display: grid; grid-template-columns: 56px 1fr; height: 54px; flex: none; }
.logo { padding: 6px 0 0 8px; }
.titlebar {
  height: 32px;
  padding: 0 0 6px 4px;
  display: grid;
  align-items: center;
  grid-template-columns: 30px 30px 30px 31px 30px 29px 30px 28px 17px 28px 17px 294px 181px 368px 13px 229px 29px 27px 105px 22px 28px 26px 20px 12px 29px 97px 28px 32px 20px;
}
.apptitle { padding-top: 2px; letter-spacing: -0.1px; }
.apptitle.doc { letter-spacing: -0.25px; }
.search {
  width: 223px; height: 26px; padding: 2px 3px;
  background: #4a5264; color: #b9bec8;
  font-style: italic; font-size: 14px; letter-spacing: -0.4px;
}
.user { padding-top: 1px; letter-spacing: 0; }
.help {
  width: 20px; height: 20px; border-radius: 50%;
  background: #dcdcdc; color: #222933; text-align: center; font-weight: 600; font-size: 15px;
}
.tabs { display: grid; height: 22px; grid-template-columns: 64px 62px 84px 96px 54px 80px 68px 78px 100px 115px 116px 48px 10px; align-items: center; }
.tabs span { text-align: center; color: #b4b8be; height: 22px; line-height: 21px; padding-right: 1px; }
.tabs .on { background: #3b4453; color: #f4f4f4; }
.tabs svg { margin: -3px 0 0 29px; }
.tabs .caret { margin: -3px 0 0 4px; }

/* ribbon */
.ribbon {
  height: 122px; flex: none; padding-left: 1px;
  display: grid; column-gap: 1px;
  grid-template-columns: 276px 315px 210px 340px 99px 276px 84px 120px 98px 92px;
}
.panel { background: #3b4453; display: flex; flex-direction: column; }
.body { height: 100px; display: grid; align-items: start; }
.ptitle { height: 22px; padding-top: 2px; display: flex; align-items: center; justify-content: center; gap: 7px; }
.ptitle .caret { margin-top: -1px; }
.big { display: flex; flex-direction: column; align-items: center; padding-top: 7px; }
.big span { margin-top: 5px; height: 20px; margin-left: -1px; }
.big .second { margin-top: 0; }
.big .caret { margin-top: 4px; }
.rows { display: grid; grid-auto-rows: 30px; row-gap: 1px; padding-top: 4px; }
.rows > div { display: flex; align-items: center; gap: 7px; padding-top: 2px; }
.rows > div > :is(svg, .combo, .wheel, .picked, .caret) { margin-top: -2px; }
.minis > div { gap: 9px; }
.draw .body { grid-template-columns: 52px 54px 68px 46px 56px; }
.draw .rows { padding-left: 7px; }
.modify .body { grid-template-columns: 91px 88px 95px 26px; padding-left: 6px; }
.modify .c1 { margin-left: 8px; }
.modify .c2 { margin-left: 8px; }
.modify .c3 { margin-left: 4px; }
.annotation .body { grid-template-columns: 59px 72px 79px; }
.annotation .rows { padding-left: 7px; }
.annotation .rows > div { gap: 10px; }
.annotation .rows .tbl { gap: 6px; }
.layers .body { grid-template-columns: 77px 263px; }
.combo { height: 28px; display: flex; align-items: center; background: #4d596d; border: 1px solid #2a313c; }
.combo span { padding-top: 2px; }
.sw { background: #0f0; flex: none; }
.layer-combo { width: 260px; padding: 0 1px 0 7px; gap: 5px; }
.layer-combo svg:first-child { margin-right: 1px; }
.layer-combo .sw { width: 18px; height: 18px; border: 1px solid #000; margin: 0 2px 0 1px; }
.combo .caret { margin-left: auto; }
.layers .lr { gap: 10px; padding-left: 4px; }
.layers .lr span { margin-left: -3px; }
.block .body { grid-template-columns: 53px 46px; }
.block .up { padding-top: 5px; }
.block .up span { margin-top: 3px; }
.props .body { grid-template-columns: 78px 24px 174px; }
.props .big svg { height: 40px; }
.props .rows { padding-left: 1px; }
.wheel {
  width: 20px; height: 20px; border-radius: 50%;
  background: conic-gradient(#ffc04a 0 30deg, #ff8f3f 30deg 90deg, #ea5a63 90deg 150deg, #8052ff 150deg 210deg, #17b1cc 210deg 270deg, #58c982 270deg 330deg, #ffc04a 330deg);
}
.combos { display: grid; grid-auto-rows: 28px; row-gap: 2px; padding-top: 6px; width: 171px; }
.combos .combo { padding-right: 2px; }
.c-color .sw { width: 20px; height: 20px; border: 1px solid #a8a8a8; margin: 0 12px 0 14px; }
.c-line b { width: 80px; height: 1px; background: #f0f0f0; margin: 0 3px 0 4px; }
.launch { margin-left: 85px; }
.props .ptitle { justify-content: flex-start; padding-left: 88px; }
.groups .body { grid-template-columns: 51px 33px; }
.groups .big svg { margin-bottom: -2px; }
.groups .rows > div { padding-left: 4px; }
.groups .rows > div:last-child { padding-left: 0; }
.picked { width: 29px; height: 28px; border: 1px solid #5eb4f5; background: #43648a; display: flex; justify-content: center; align-items: center; }
.utils .body { grid-template-columns: 89px 30px; }
.utils .rows { padding-left: 2px; }
.clip .body { grid-template-columns: 66px 32px; }
.clip .dn { padding-top: 8px; }
.clip .rows { padding: 5px 0 0 3px; }
.view .body { grid-template-columns: 78px; }
.view .big { padding-top: 10px; }
.view .big span { margin-top: 8px; }
.view .big .caret { margin-top: 3px; }
.view .ptitle { justify-content: flex-start; padding-left: 6px; }
.view .launch { margin-left: 5px; }

/* drawing file tabs */
.filetabs { height: 38px; flex: none; border-bottom: 5px solid #3b4453; display: grid; grid-template-columns: 39px 154px 200px; align-items: start; padding-top: 5px; }
.filetabs .ftshape { grid-column: 1 / -1; grid-row: 1; height: 28px; }
.filetabs span { grid-row: 1; grid-column: 2; color: #b4b8be; padding-top: 5px; letter-spacing: -0.3px; }
.filetabs .on { grid-column: 3; color: #f4f4f4; }

/* canvas */
.canvas { position: relative; height: 757px; flex: none; background: #222830; overflow: hidden; }
.dims { fill: #fff; font-family: "Liberation Sans", Arial, sans-serif; font-size: 15px; letter-spacing: 0; }
.vplabel { position: absolute; left: 3px; top: 6px; letter-spacing: -0.05px; }
.cmd { position: absolute; left: 387px; top: 667px; width: 1145px; height: 89px; display: flex; font-family: "DejaVu Sans Mono", monospace; font-size: 13.600px; letter-spacing: 0.560px; }
.cmdside { width: 31px; background: #2a303c; border-radius: 3px 0 0 3px; }
.cmdmain { flex: 1; padding-top: 1px; }
.history { height: 63px; background: #979899; color: #17191c; padding: 4px 3px; }
.history p { margin: 0; height: 19px; line-height: 21px; }
.entry { height: 24px; margin-top: 1px; background: #bbbcbe; border: 1px solid #d0d1d3; display: flex; align-items: center; padding: 0 5px 0 4px; color: #5d5f63; gap: 8px; }
.entry em { letter-spacing: 0.7px; }
.entry .up { margin-left: auto; }

/* layout tabs and status bar */
.lower { height: 59px; flex: none; border-top: 1px solid #444c59; }
.layouts { height: 26px; display: grid; grid-template-columns: 29px 72px 81px 110px; }
.lshape { grid-column: 1 / -1; grid-row: 1; }
.layouts span { grid-row: 1; grid-column: 3; color: #b4b8be; padding-top: 1px; letter-spacing: -0.3px; }
.layouts span.on { grid-column: 2; font-weight: 700; color: #fff; font-size: 14px; letter-spacing: -0.2px; }
.layouts span:last-child { grid-column: 4; }
.status { height: 30px; padding-left: 1211px; display: grid; grid-template-columns: 59px 80px 130px 78px 132px 48px 30px 30px 34px 60px; column-gap: 3px; }
.sg { background: #3b4453; display: grid; align-items: center; }
.model { padding: 1px 0 0 5px; letter-spacing: -0.2px; }
.g1 { grid-template-columns: 32px 28px 12px; padding-left: 5px; }
.g2 { grid-template-columns: 25px 35px 22px 27px 12px; padding-left: 5px; }
.act { width: 28px; height: 28px; background: #618fbf; display: flex; align-items: center; justify-content: center; }
.g3 { grid-template-columns: 30px 34px 12px; margin-left: -1px; }
.g4 { grid-template-columns: 35px 31px 30px 20px 12px; }
.g5 { grid-template-columns: 30px 12px; padding-left: 5px; margin-right: -2px; }
.g6, .g7 { padding-left: 5px; }
.g8 { padding-left: 3px; }
.g9 { grid-template-columns: 30px 20px; padding-left: 5px; }

/* taskbar */
.taskbar { height: 50px; flex: none; display: grid; grid-template-columns: 60px 64px 61px 61px 64px 61px 61px 64px 61px 1fr; background: linear-gradient(90deg, #21373e 0, #21363f 1200px, #1c2a40 1550px, #1a2342 100%); }
.tb { display: flex; align-items: center; justify-content: center; }
.view-tasks { padding-right: 4px; }
.edge { background: linear-gradient(#ff7c06, #ff7c06) 0 100% / 100% 3px no-repeat #a76a35; }
.run { background: linear-gradient(#78b9ea, #78b9ea) 5px 100% / 51px 3px no-repeat; }
.multi { background: linear-gradient(90deg, #78b9ea 40px, #5c8cb4 40px) 6px 100% / 51px 3px no-repeat; }
.word { background-position-x: 7px; }
.w { font: bold 13px "Open Sans", sans-serif; fill: #fff; }
.tray { display: grid; grid-template-columns: 30px 31px 28px 33px 40px 77px 64px 4px; align-items: center; padding-left: 1054px; }
.tray > svg:first-child { margin-top: -1px; }
.lang { padding-top: 1px; }
.clock { display: grid; justify-items: center; line-height: 23px; letter-spacing: -0.6px; padding-top: 1px; }
.notif { margin: 4px 0 0 19px; }
.notif text { font: 14px "Open Sans", sans-serif; fill: #fff; }
.peek { width: 1px; height: 50px; background: #7f8797; }
```
